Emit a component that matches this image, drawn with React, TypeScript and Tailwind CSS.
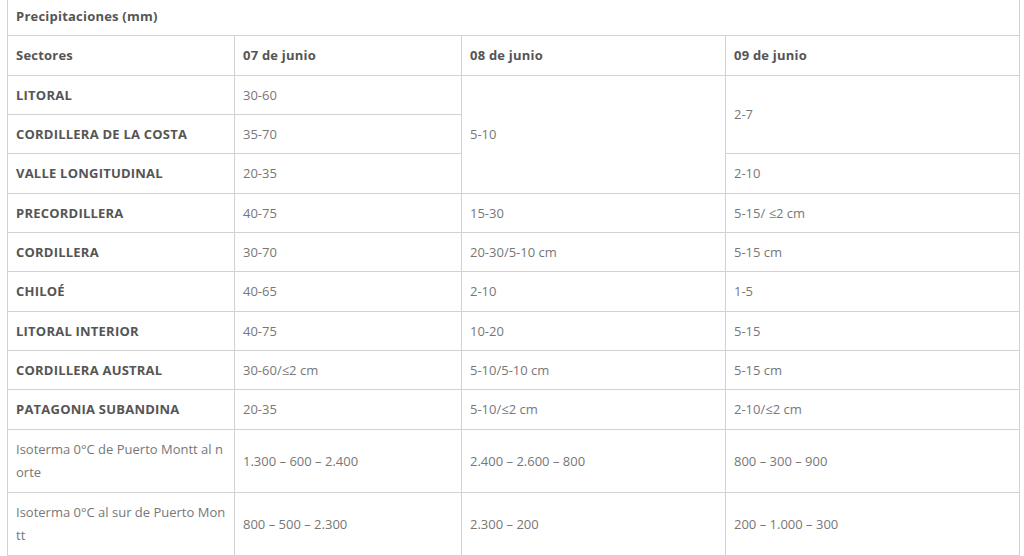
const rows: { sector: string; bold?: boolean; d7: string; d8?: { text: string; span: number } | null; d9?: { text: string; span: number } | null }[] = [
  { sector: "LITORAL", bold: true, d7: "30-60", d8: { text: "5-10", span: 3 }, d9: { text: "2-7", span: 2 } },
  { sector: "CORDILLERA DE LA COSTA", bold: true, d7: "35-70", d8: null, d9: null },
  { sector: "VALLE LONGITUDINAL", bold: true, d7: "20-35", d8: null, d9: { text: "2-10", span: 1 } },
  { sector: "PRECORDILLERA", bold: true, d7: "40-75", d8: { text: "15-30", span: 1 }, d9: { text: "5-15/ ≤2 cm", span: 1 } },
  { sector: "CORDILLERA", bold: true, d7: "30-70", d8: { text: "20-30/5-10 cm", span: 1 }, d9: { text: "5-15 cm", span: 1 } },
  { sector: "CHILOÉ", bold: true, d7: "40-65", d8: { text: "2-10", span: 1 }, d9: { text: "1-5", span: 1 } },
  { sector: "LITORAL INTERIOR", bold: true, d7: "40-75", d8: { text: "10-20", span: 1 }, d9: { text: "5-15", span: 1 } },
  { sector: "CORDILLERA AUSTRAL", bold: true, d7: "30-60/≤2 cm", d8: { text: "5-10/5-10 cm", span: 1 }, d9: { text: "5-15 cm", span: 1 } },
  { sector: "PATAGONIA SUBANDINA", bold: true, d7: "20-35", d8: { text: "5-10/≤2 cm", span: 1 }, d9: { text: "2-10/≤2 cm", span: 1 } },
  { sector: "Isoterma 0°C de Puerto Montt al norte", d7: "1.300 – 600 – 2.400", d8: { text: "2.400 – 2.600 – 800", span: 1 }, d9: { text: "800 – 300 – 900", span: 1 } },
  { sector: "Isoterma 0°C al sur de Puerto Montt", d7: "800 – 500 – 2.300", d8: { text: "2.300 – 200", span: 1 }, d9: { text: "200 – 1.000 – 300", span: 1 } },
];

const cell = "border border-[#d2d2d2] pl-2 pr-[6px] py-2 align-middle leading-[22.35px] break-all";
const bold = "font-bold text-[#555] tracking-[0.22px]";

export default function App() {
  return (
    <div className="min-h-screen bg-white pl-[7px] pr-[5px] font-['Open_Sans',_'Liberation_Sans',_sans-serif] text-[13px] text-[#777]">
      <table className="mt-[-4px] w-[1012px] table-fixed border-collapse text-left">
        <colgroup>
          <col className="w-[227px]" />
          <col className="w-[227px]" />
          <col className="w-[264px]" />
          <col className="w-[294px]" />
        </colgroup>
        <tbody>
          <tr>
            <td colSpan={4} className={`${cell} ${bold}`}>
              Precipitaciones (mm)
            </td>
          </tr>
          <tr className={bold}>
            <td className={cell}>Sectores</td>
            <td className={cell}>07 de junio</td>
            <td className={cell}>08 de junio</td>
            <td className={cell}>09 de junio</td>
          </tr>
          {rows.map((r) => (
            <tr key={r.sector} className={r.bold ? "" : "h-[63px]"}>
              <td className={`${cell} ${r.bold ? bold : ""}`}>{r.sector}</td>
              <td className={cell}>{r.d7}</td>
              {r.d8 && (
                <td rowSpan={r.d8.span} className={cell}>
                  {r.d8.text}
                </td>
              )}
              {r.d9 && (
                <td rowSpan={r.d9.span} className={cell}>
                  {r.d9.text}
                </td>
              )}
            </tr>
          ))}
        </tbody>
      </table>
    </div>
  );
}
